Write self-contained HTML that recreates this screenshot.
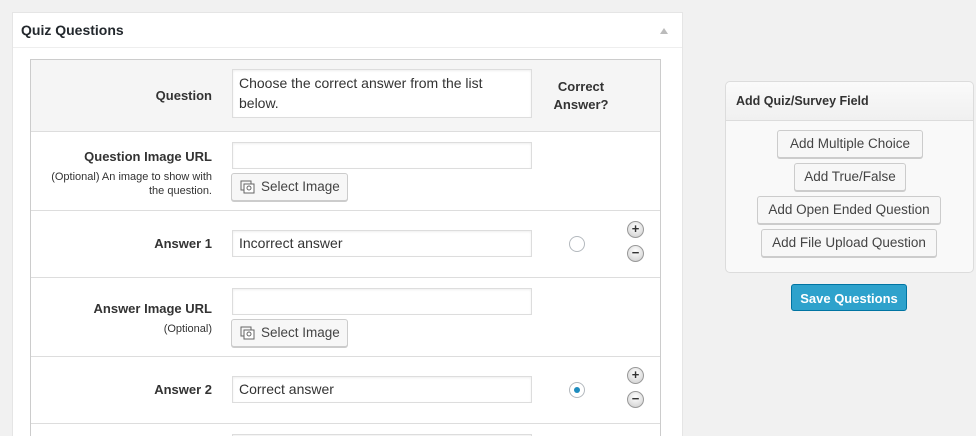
<!DOCTYPE html>
<html style="height:436px;overflow:hidden"><head><style>
*{box-sizing:border-box}
body{margin:0;width:976px;height:436px;overflow:hidden;background:#f1f1f1;font-family:"Liberation Sans",sans-serif;color:#444;position:relative}
.panel{position:absolute;left:12px;top:12px;width:671px;height:424px;overflow:hidden;background:#fff;border:1px solid #e5e5e5;border-bottom:none}
.ph{height:35px;border-bottom:1px solid #eee;font-weight:bold;font-size:14px;color:#23282d;padding:9px 0 0 8px}
.arrow{position:absolute;right:14px;top:15px;width:0;height:0;border-left:4px solid transparent;border-right:4px solid transparent;border-bottom:6px solid #bbb}
.tbl{position:absolute;left:17px;top:46px;width:631px;height:378px;overflow:hidden;border:1px solid #ccc;border-bottom:none}
.row{position:absolute;left:0;width:629px;border-bottom:1px solid #ddd}
.lbl{position:absolute;right:448px;font-weight:bold;font-size:13px;color:#333;text-align:right;white-space:nowrap}
.sub{position:absolute;right:448px;font-size:11px;color:#333;text-align:right;line-height:14px;width:180px}
.inp{position:absolute;left:201px;width:300px;height:27px;border:1px solid #ddd;box-shadow:inset 0 1px 2px rgba(0,0,0,.07);background:#fff;font-size:14px;padding:4px 6px;color:#333}
.btn{position:absolute;left:200px;width:117px;height:28px;border:1px solid #ccc;border-radius:3px;background:#f7f7f7;box-shadow:0 1px 0 #ccc;font-size:13.5px;color:#444;padding:5px 0 0 29px}
.btn svg{position:absolute;left:8px;top:6px}
.radio{position:absolute;left:538px;width:16px;height:16px;border:1px solid #b4b9be;border-radius:50%;background:#fff}
.pm{position:absolute;left:596px;width:17px;height:17px;border-radius:50%;background:radial-gradient(circle at 50% 35%,#fff,#ccc);border:1px solid #999;font-size:13px;font-weight:bold;line-height:14px;text-align:center;color:#333}
.box{position:absolute;left:725px;top:81px;width:249px;height:192px;background:#f9f9f9;border:1px solid #dcdcdc;border-radius:5px}
.bh{height:39px;border-bottom:1px solid #dcdcdc;font-weight:bold;font-size:12.5px;color:#333;padding:12px 0 0 10px;background:linear-gradient(#fafafa,#f0f0f0);border-radius:5px 5px 0 0}
.ab{position:absolute;height:28px;border:1px solid #ccc;border-radius:3px;background:#f7f7f7;box-shadow:0 1px 0 #ccc;font-size:13.5px;color:#444;text-align:center;padding-top:5px}
.save{position:absolute;left:791px;top:284px;width:116px;height:27px;background:#2ea2cc;border:1px solid #0074a2;border-radius:3px;color:#fff;font-weight:bold;font-size:13px;text-align:center;padding-top:6px}
</style></head><body>
<div class="panel"><div class="ph">Quiz Questions</div><div class="arrow"></div>
<div class="tbl">
 <div class="row" style="top:0;height:72px;background:#f5f5f5">
  <div class="lbl" style="top:28px">Question</div>
  <div class="inp" style="top:9px;height:49px;line-height:20px;padding-top:3px">Choose the correct answer from the list below.</div>
  <div style="position:absolute;left:510px;top:18px;width:80px;text-align:center;font-weight:bold;font-size:13px;color:#333;line-height:18px">Correct<br>Answer?</div>
 </div>
 <div class="row" style="top:72px;height:79px">
  <div class="lbl" style="top:17px">Question Image URL</div>
  <div class="sub" style="top:38px">(Optional) An image to show with<br>the question.</div>
  <div class="inp" style="top:10px"></div>
  <div class="btn" style="top:41px"><svg width="16" height="15" viewBox="0 0 16 15"><rect x="1" y="1" width="10" height="9" fill="none" stroke="#666"/><rect x="4" y="4" width="10" height="9" fill="#fff" stroke="#666"/><circle cx="9" cy="8" r="2" fill="none" stroke="#666"/></svg>Select Image</div>
 </div>
 <div class="row" style="top:151px;height:67px">
  <div class="lbl" style="top:25px">Answer 1</div>
  <div class="inp" style="top:19px">Incorrect answer</div>
  <div class="radio" style="top:25px"></div>
  <div class="pm" style="top:10px">+</div><div class="pm" style="top:34px">−</div>
 </div>
 <div class="row" style="top:218px;height:79px">
  <div class="lbl" style="top:23px">Answer Image URL</div>
  <div class="sub" style="top:44px">(Optional)</div>
  <div class="inp" style="top:10px"></div>
  <div class="btn" style="top:41px"><svg width="16" height="15" viewBox="0 0 16 15"><rect x="1" y="1" width="10" height="9" fill="none" stroke="#666"/><rect x="4" y="4" width="10" height="9" fill="#fff" stroke="#666"/><circle cx="9" cy="8" r="2" fill="none" stroke="#666"/></svg>Select Image</div>
 </div>
 <div class="row" style="top:297px;height:67px">
  <div class="lbl" style="top:25px">Answer 2</div>
  <div class="inp" style="top:19px">Correct answer</div>
  <div class="radio" style="top:25px"><div style="width:6px;height:6px;border-radius:50%;background:#1e8cbe;margin:4px"></div></div>
  <div class="pm" style="top:10px">+</div><div class="pm" style="top:34px">−</div>
 </div>
 <div class="row" style="top:364px;height:14px;border:none;overflow:hidden"><div class="inp" style="top:10px"></div></div>
</div></div>
<div class="box"><div class="bh">Add Quiz/Survey Field</div>
 <div class="ab" style="left:51px;top:48px;width:146px">Add Multiple Choice</div>
 <div class="ab" style="left:68px;top:81px;width:112px">Add True/False</div>
 <div class="ab" style="left:31px;top:114px;width:184px">Add Open Ended Question</div>
 <div class="ab" style="left:35px;top:147px;width:176px">Add File Upload Question</div>
</div>
<div class="save">Save Questions</div>
</body></html>
